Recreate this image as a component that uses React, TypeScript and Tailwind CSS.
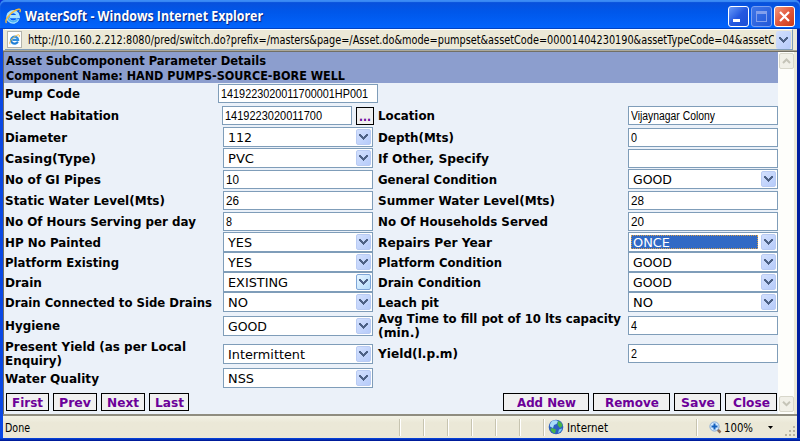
import { useLayoutEffect, useRef, type ReactNode } from "react";

// Single line of text fitted to a fixed width.
function Fit({ w, children, className = "" }: { w: number; children: string; className?: string }) {
  const ref = useRef<HTMLSpanElement>(null);
  useLayoutEffect(() => {
    const el = ref.current;
    if (el && el.offsetWidth) {
      el.style.transform = "none";
      el.style.transform = `scaleX(${w / el.getBoundingClientRect().width})`;
    }
  }, [w, children]);
  return (
    <span className={`block shrink-0 whitespace-nowrap ${className}`} style={{ width: w }}>
      <span ref={ref} className="inline-block origin-left align-top">
        {children}
      </span>
    </span>
  );
}

type Line = [string, number];
type Control = { kind: "input" | "select"; text: string; w: number; focused?: boolean; hot?: boolean };
type RowData = { h: string; left: Line[]; a: Control; right?: Line[]; b?: Control };

const inp = (text: string, w: number): Control => ({ kind: "input", text, w });
const sel = (text: string, w: number, extra = {}): Control => ({ kind: "select", text, w, ...extra });

const rows: RowData[] = [
  { h: "h-[21px]", left: [["Diameter", 62]], a: sel("112", 24), right: [["Depth(Mts)", 76]], b: inp("0", 6) },
  { h: "h-[21px]", left: [["Casing(Type)", 91]], a: sel("PVC", 26), right: [["If Other, Specify", 111]], b: inp("", 0) },
  { h: "h-[21px]", left: [["No of GI Pipes", 96]], a: inp("10", 13), right: [["General Condition", 119]], b: sel("GOOD", 39) },
  { h: "h-[21px]", left: [["Static Water Level(Mts)", 160]], a: inp("26", 13), right: [["Summer Water Level(Mts)", 177]], b: inp("28", 13) },
  { h: "h-[21px]", left: [["No Of Hours Serving per day", 191]], a: inp("8", 6), right: [["No Of Households Served", 170]], b: inp("20", 13) },
  { h: "h-5", left: [["HP No Painted", 96]], a: sel("YES", 24), right: [["Repairs Per Year", 114]], b: sel("ONCE", 37, { focused: true }) },
  { h: "h-5", left: [["Platform Existing", 114]], a: sel("YES", 24), right: [["Platform Condition", 124]], b: sel("GOOD", 39) },
  { h: "h-5", left: [["Drain", 37]], a: sel("EXISTING", 60, { hot: true }), right: [["Drain Condition", 103]], b: sel("GOOD", 39) },
  { h: "h-5", left: [["Drain Connected to Side Drains", 207]], a: sel("NO", 20), right: [["Leach pit", 61]], b: sel("NO", 20) },
  { h: "h-7", left: [["Hygiene", 55]], a: sel("GOOD", 39), right: [["Avg Time to fill pot of 10 lts capacity", 243], ["(min.)", 42]], b: inp("4", 6) },
  { h: "h-7", left: [["Present Yield (as per Local", 181], ["Enquiry)", 57]], a: sel("Intermittent", 77), right: [["Yield(l.p.m)", 80]], b: inp("2", 6) },
  { h: "h-[22px]", left: [["Water Quality", 94]], a: sel("NSS", 26) },
];

function Label({ lines, className }: { lines: Line[]; className: string }) {
  return (
    <div className={`flex h-full shrink-0 flex-col justify-center text-[12.5px] leading-[14px] font-bold ${className}`}>
      {lines.map(([t, w]) => (
        <Fit key={t} w={w}>{t}</Fit>
      ))}
    </div>
  );
}

function TextBox({ text, w, width = "w-[150px]" }: { text: string; w: number; width?: string }) {
  return (
    <div className={`flex h-[19px] ${width} shrink-0 items-center border border-[#7f9db9] bg-white pl-[2px] font-['Liberation_Sans',Arial,sans-serif] text-[12.5px] leading-[14px]`}>
      {text && <Fit w={w}>{text}</Fit>}
    </div>
  );
}

function Chevron() {
  return (
    <svg width="9" height="6" viewBox="0 0 9 6" shapeRendering="crispEdges">
      <path d="M0 0h2v1h1v1h1v1h1v-1h1v-1h1v-1h2v2h-1v1h-1v1h-1v1h-1v1h-1v-1h-1v-1h-1v-1h-1v-1h-1z" fill="#4d6185" />
    </svg>
  );
}

function SelectBox({ text, w, focused, hot }: Control) {
  return (
    <div className="flex h-5 w-[150px] shrink-0 items-center border border-[#7f9db9] bg-white pr-px pl-[2px] text-[13px] leading-[14px]">
      <div className={`flex h-[14px] w-[127px] items-start ${focused ? "bg-[#316ac5] pl-[2px] text-white outline outline-dotted -outline-offset-1 outline-[#d6a04b]" : "pl-[2px]"}`}>
        <Fit w={w} className="pt-px">{text}</Fit>
      </div>
      <div className={`ml-auto flex h-4 w-[15px] items-center justify-center rounded-[2px] border ${hot ? "border-[#7fa6d8] bg-linear-to-br from-[#e8f6ff] to-[#b4dcfb]" : "border-[#b9cbf3] bg-linear-to-br from-[#d3e0fd] to-[#b6cbfa]"}`}>
        <Chevron />
      </div>
    </div>
  );
}

function Cell({ c, tall }: { c: Control; tall: boolean }) {
  const pad = tall ? "pt-1" : c.kind === "input" ? "pt-px" : "";
  return (
    <div className={`h-full shrink-0 ${pad}`}>
      {c.kind === "input" ? <TextBox text={c.text} w={c.w} /> : <SelectBox {...c} />}
    </div>
  );
}

function PushButton({ width, w, children }: { width: string; w: number; children: string }) {
  return (
    <button className={`flex h-[18px] ${width} shrink-0 items-center justify-center border border-black bg-[#f0f0f0] text-[13px] leading-[15px] font-bold text-[#6c0099]`}>
      <Fit w={w}>{children}</Fit>
    </button>
  );
}

function IeLogo({ size, light }: { size: number; light?: boolean }) {
  return (
    <svg width={size} height={size} viewBox="0 0 16 16" fill="none">
      <path d="M12.9 11A5.200 5.200 0 1 1 13.300 8.600H5" stroke={light ? "#a6e2ff" : "#2f8fe0"} strokeWidth="3.200" />
      <path d="M12.600 11.200A5.200 5.200 0 0 1 3 8.600" stroke={light ? "#4fb4f2" : "#1f78d0"} strokeWidth="1.600" />
      <path d="M1.500 15C-1 12 7 2.500 13.500 1.200c2-.3 2.200 1.200 1.200 3" stroke="#f6b93a" strokeWidth="1.400" />
    </svg>
  );
}

function ScrollButton({ down }: { down?: boolean }) {
  return (
    <div className="flex h-4 w-[15px] items-center justify-center rounded-[2px] border border-[#d8d7cb] bg-[#f1f0e8]">
      <svg width="9" height="6" viewBox="0 0 9 6" fill="none" stroke="#c5c4b8" strokeWidth="2">
        <path d={down ? "M1 .7l3.5 3.5L8 .7" : "M1 5l3.5-3.5L8 5"} />
      </svg>
    </div>
  );
}

function CaptionButton({ className, children }: { className: string; children: ReactNode }) {
  return (
    <div className={`flex size-[21px] items-center justify-center rounded-[3px] border ${className}`}>
      <svg width="19" height="19" viewBox="0 0 19 19" fill="none" shapeRendering="crispEdges">
        {children}
      </svg>
    </div>
  );
}

function Sep() {
  return <div className="mr-[22px] h-[17px] w-[2px] shrink-0 border-r border-l border-r-white border-l-[#c7c4b0]" />;
}

export default function App() {
  return (
    <div className="flex h-[441px] w-[800px] flex-col overflow-hidden bg-[#0831d9] font-['DejaVu_Sans',Verdana,sans-serif] text-black">
      {/* Title bar */}
      <div className="flex h-[29px] shrink-0 items-center rounded-t-[5px] bg-linear-to-b from-[#0a4fd8] via-[#0057ea] via-40% to-[#0264fd] pt-[3px] pr-[5px] pl-[5px] shadow-[inset_0_2px_1px_#3c8cf5,inset_0_-1px_0_#0042c4]">
        <IeLogo size={16} light />
        <div className="ml-[4px] font-['Open_Sans','Trebuchet_MS',sans-serif] text-[14.5px] leading-5 font-bold text-white [text-shadow:1px_1px_1px_#0b1f7c]">
          <Fit w={238}>WaterSoft - Windows Internet Explorer</Fit>
        </div>
        <div className="ml-auto flex gap-[2px]">
          <CaptionButton className="border-white bg-linear-to-br from-[#6a9af8] via-[#2458e0] to-[#1b4fd6]">
            <path d="M4 12h7v3H4z" fill="#fff" />
          </CaptionButton>
          <CaptionButton className="border-[#7ba0f0] bg-linear-to-br from-[#3f76e8] to-[#2156d8]">
            <path d="M4 4h11v11H4zM5 7h9v7H5z" fill="#829fec" fillRule="evenodd" />
          </CaptionButton>
          <CaptionButton className="border-white bg-linear-to-br from-[#f0977c] via-[#e2573a] to-[#c93a14]">
            <path d="M5 5l9 9M14 5l-9 9" stroke="#fff" strokeWidth="2.2" shapeRendering="auto" />
          </CaptionButton>
        </div>
      </div>

      {/* Window body */}
      <div className="flex h-[409px] shrink-0 flex-col border-r-[3px] border-l-[3px] border-r-[#001ea0] border-l-[#0a48e4] bg-[#ece9d8]">
        {/* Address bar */}
        <div className="ml-[2px] flex h-[21px] w-[788px] shrink-0 items-center border-t border-r border-b border-t-white border-r-[#7f9db9] border-b-[#7f9db9] pr-px">
          <div className="ml-[2px] flex h-[17px] w-[15px] shrink-0 items-center justify-center border border-[#b4b4ac] bg-white">
            <IeLogo size={11} />
          </div>
          <div className="ml-[6px] w-[746px] overflow-hidden pt-px text-[12.5px] leading-4">
            <Fit w={753}>
              http://10.160.2.212:8080/pred/switch.do?prefix=/masters&page=/Asset.do&mode=pumpset&assetCode=00001404230190&assetTypeCode=04&assetCo
            </Fit>
          </div>
          <div className="ml-[2px] flex h-[18px] w-[15px] shrink-0 items-center justify-center rounded-[2px] bg-linear-to-br from-[#d3e0fd] to-[#b6cbfa]">
            <Chevron />
          </div>
        </div>
        <div className="h-[2px] shrink-0 border-t border-[#aca899] bg-[#716f64]" />

        {/* Page and scroll bar */}
        <div className="flex h-[362px] shrink-0 border-l border-[#716f64]">
          <div className="flex w-[774px] shrink-0 flex-col bg-[#ebf1f9]">
            <div className="h-[31px] shrink-0 bg-[#8c9ece] pt-[2px] pl-[2px] text-[11.5px] leading-[15px] font-bold">
              <Fit w={260}>Asset SubComponent Parameter Details</Fit>
              <Fit w={339}>Component Name: HAND PUMPS-SOURCE-BORE WELL</Fit>
            </div>
            <div className="flex h-[21px] shrink-0 pl-px">
              <Label lines={[["Pump Code", 75]]} className="w-[213px]" />
              <div className="pt-px">
                <TextBox text="1419223020011700001HP001" w={147} width="w-[160px]" />
              </div>
            </div>
            <div className="flex h-[23px] shrink-0 pl-px">
              <Label lines={[["Select Habitation", 114]]} className="w-[217px]" />
              <div className="flex w-[156px] items-start gap-1 pt-[2px]">
                <TextBox text="1419223020011700" w={97} width="w-[130px]" />
                <div className="pt-px">
                  <PushButton width="w-[18px]" w={12}>...</PushButton>
                </div>
              </div>
              <Label lines={[["Location", 57]]} className="w-[250px]" />
              <div className="pt-[2px]">
                <TextBox text="Vijaynagar Colony" w={84} />
              </div>
            </div>
            {rows.map((r) => (
              <div key={r.left[0][0]} className={`flex ${r.h} shrink-0 pl-px`}>
                <Label lines={r.left} className={`w-[218px] ${r.h === "h-5" ? "pt-px" : ""}`} />
                <Cell c={r.a} tall={r.h === "h-7"} />
                {r.right && <Label lines={r.right} className={`ml-[5px] w-[250px] ${r.h === "h-5" ? "pt-px" : ""}`} />}
                {r.b && <Cell c={r.b} tall={r.h === "h-7"} />}
              </div>
            ))}
            <div className="mt-[3px] flex gap-1 pr-px pl-[2px]">
              <PushButton width="w-[43px]" w={31}>First</PushButton>
              <PushButton width="w-[44px]" w={32}>Prev</PushButton>
              <PushButton width="w-[44px]" w={32}>Next</PushButton>
              <PushButton width="w-[40px]" w={29}>Last</PushButton>
              <div className="ml-auto flex gap-1">
                <PushButton width="w-[86px]" w={59}>Add New</PushButton>
                <PushButton width="w-[77px]" w={54}>Remove</PushButton>
                <PushButton width="w-[47px]" w={34}>Save</PushButton>
                <PushButton width="w-[52px]" w={37}>Close</PushButton>
              </div>
            </div>
          </div>
          <div className="flex w-4 shrink-0 flex-col items-end justify-between bg-[#fefefb] pt-px pb-[2px]">
            <ScrollButton />
            <ScrollButton down />
          </div>
        </div>

        {/* Status bar */}
        <div className="flex h-6 shrink-0 items-center border-t-2 border-[#8f8d80] bg-linear-to-b from-[#f3f2e6] via-[#ebe8d7] via-30% to-[#ebe8d7] pl-[2px] text-[11.5px] leading-4">
          <div className="w-[394px] shrink-0 pt-px">
            <Fit w={25}>Done</Fit>
          </div>
          <Sep /><Sep /><Sep /><Sep /><Sep /><Sep />
          <div className="h-[17px] w-[2px] shrink-0 border-r border-l border-r-white border-l-[#c7c4b0]" />
          <svg className="ml-[3px] shrink-0" width="16" height="16" viewBox="0 0 16 16">
            <circle cx="8" cy="8" r="7.3" fill="#2c5fc0" />
            <path d="M5 1.5q4-1 5 1L8.500 5 6 6 5 9 2 7.500Q1.500 4 5 1.500z" fill="#a9dcf8" />
            <path d="M10 2q4 1 4.500 5L12 9 9.500 6zM4 9l4 1.500-1 4Q3 13 2.500 10z" fill="#48b549" />
            <path d="M11 10.500l3-1q-.5 3-4 4.500z" fill="#7ccdf0" />
          </svg>
          <div className="ml-[3px] w-[129px] shrink-0 pt-px">
            <Fit w={41}>Internet</Fit>
          </div>
          <div className="h-[17px] w-[2px] shrink-0 border-r border-l border-r-white border-l-[#c7c4b0]" />
          <svg className="ml-[11px] shrink-0" width="13" height="13" viewBox="0 0 13 13">
            <path d="M8.500 8.500l3 3" stroke="#8b6b58" strokeWidth="2.500" />
            <circle cx="5.500" cy="5.500" r="4.600" fill="#d4eaff" stroke="#86a8d4" />
            <path d="M5.500 2.500v6M2.500 5.500h6" stroke="#1560bd" strokeWidth="2" />
          </svg>
          <div className="ml-[2px] w-[44px] shrink-0 pt-px">
            <Fit w={29}>100%</Fit>
          </div>
          <svg className="shrink-0" width="5" height="3" viewBox="0 0 5 3">
            <path d="M0 0h5L2.500 3z" fill="#000" />
          </svg>
          <svg className="mt-2 mr-px ml-auto shrink-0" width="12" height="12" viewBox="0 0 12 12" fill="#b8b4a2">
            <path d="M9 1h2v2H9zM9 5h2v2H9zM9 9h2v2H9zM5 5h2v2H5zM5 9h2v2H5zM1 9h2v2H1z" />
          </svg>
        </div>
      </div>
      <div className="h-[3px] shrink-0 bg-linear-to-b from-[#0a48e4] to-[#00138c]" />
    </div>
  );
}
